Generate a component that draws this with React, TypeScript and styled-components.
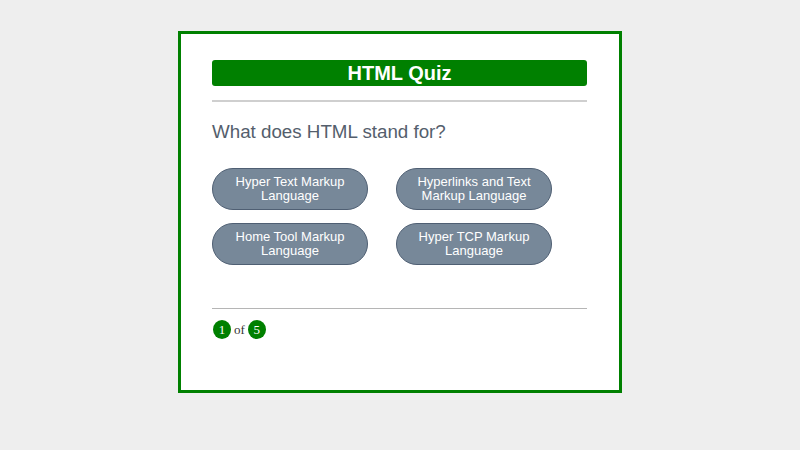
import React from 'react'
import styled, { createGlobalStyle } from 'styled-components'

const questions = [
  {
    question: 'What does HTML stand for?',
    answers: [
      'Hyper Text Markup Language',
      'Hyperlinks and Text Markup Language',
      'Home Tool Markup Language',
      'Hyper TCP Markup Language',
    ],
  },
]

const GlobalStyle = createGlobalStyle`
  html, body {
    margin: 0;
    padding: 0;
    background: #eeeeee;
  }
  body {
    font-family: "Liberation Sans", Arial, sans-serif;
  }
`

const Page = styled.div`
  width: 800px;
  height: 450px;
  display: flex;
  justify-content: center;
  padding-top: 31px;
  box-sizing: border-box;
`

const Card = styled.div`
  width: 444px;
  height: 362px;
  box-sizing: border-box;
  background: #fff;
  border: 3px solid #008000;
  padding: 26px 32px 0 31px;
`

const Title = styled.h1`
  margin: 0;
  height: 26px;
  background: #008000;
  border-radius: 3px;
  color: #fff;
  font-size: 20px;
  font-weight: 700;
  line-height: 26px;
  text-align: center;
`

const Divider = styled.hr<{ $tone?: string }>`
  border: none;
  height: ${p => (p.$tone ? '1px' : '2px')};
  background: ${p => p.$tone || '#cfcfcf'};
  margin: ${p => (p.$tone ? '0' : '14px 0 0')};
`

const Question = styled.h2`
  margin: 18px 0 0;
  color: #545e6c;
  font-size: 18.75px;
  font-weight: 400;
  line-height: 24px;
`

const Answers = styled.div`
  display: grid;
  grid-template-columns: 156px 156px;
  grid-auto-rows: 42px;
  column-gap: 28px;
  row-gap: 13px;
  margin: 24px 0 43px;
`

const AnswerButton = styled.button`
  border-radius: 21px;
  border: 1px solid #4f5f73;
  background: #778899;
  color: #fff;
  font-family: "Liberation Sans", Arial, sans-serif;
  font-size: 13px;
  line-height: 14px;
  padding: 0 12px;
  cursor: pointer;
`

const Progress = styled.div`
  display: flex;
  align-items: center;
  gap: 3px;
  margin-top: 11px;
  padding-left: 1px;
  font-family: "Liberation Serif", "Times New Roman", serif;
  font-size: 13px;
  color: #333;
`

const Badge = styled.span`
  width: 18px;
  height: 19px;
  border-radius: 50%;
  background: #008000;
  color: #fff;
  display: flex;
  align-items: center;
  justify-content: center;
  font-size: 13px;
  line-height: 1;
`

export default function App() {
  const current = questions[0]
  return (
    <>
      <GlobalStyle />
      <Page>
        <Card>
          <Title>HTML Quiz</Title>
          <Divider />
          <Question>{current.question}</Question>
          <Answers>
            {current.answers.map(a => (
              <AnswerButton key={a}>{a}</AnswerButton>
            ))}
          </Answers>
          <Divider $tone="#b5b5b5" />
          <Progress>
            <Badge>1</Badge>
            of
            <Badge>5</Badge>
          </Progress>
        </Card>
      </Page>
    </>
  )
}
